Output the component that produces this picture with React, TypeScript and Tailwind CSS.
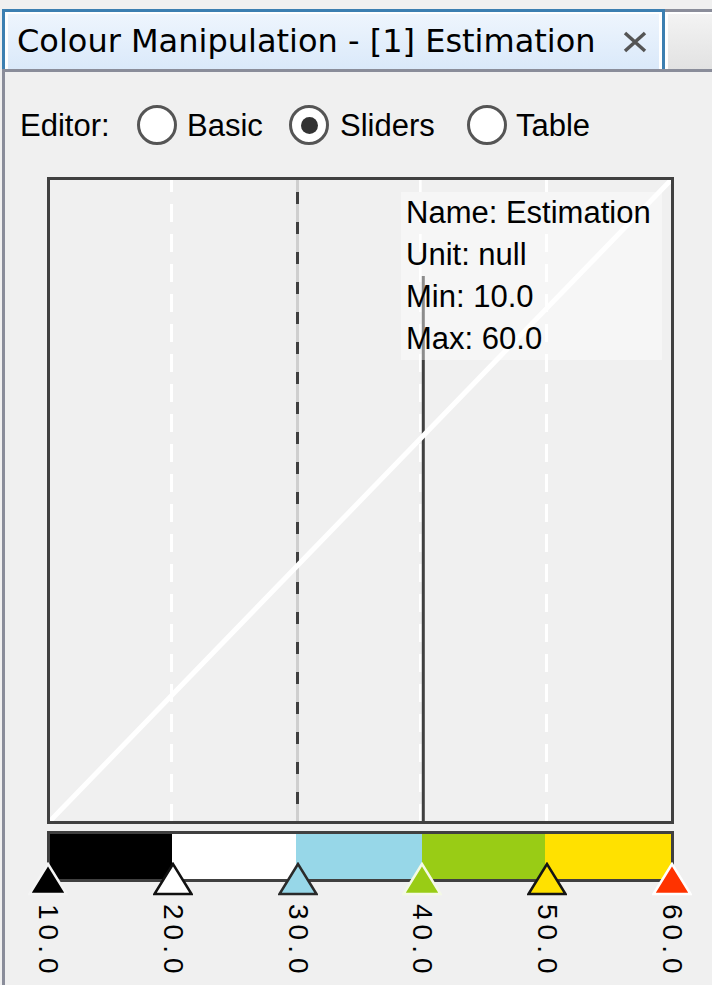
import React, { useState } from 'react';

interface Stop {
  value: number;
  fill: string;
  stroke: string;
}

const stops: Stop[] = [
  { value: 10, fill: '#000000', stroke: '#f4f4f4' },
  { value: 20, fill: '#ffffff', stroke: '#111111' },
  { value: 30, fill: '#97d7e8', stroke: '#2a2a2a' },
  { value: 40, fill: '#99cc15', stroke: '#f4f9e6' },
  { value: 50, fill: '#ffe100', stroke: '#151515' },
  { value: 60, fill: '#ff3300', stroke: '#ffffff' },
];

// colour segments of the bar, inner widths in px
const segments = [
  { color: '#000000', width: 122 },
  { color: '#ffffff', width: 124 },
  { color: '#97d7e8', width: 126 },
  { color: '#99cc15', width: 123 },
  { color: '#ffe100', width: 126 },
];

const MIN = 10;
const MAX = 60;

// x of a value, relative to the chart wrapper
const toX = (v: number) => 1 + ((v - MIN) / (MAX - MIN)) * 624;

const Radio: React.FC<{ checked?: boolean; onClick: () => void }> = ({ checked, onClick }) => (
  <button
    onClick={onClick}
    className="w-[40px] h-[40px] rounded-full border-[3px] border-[#555555] bg-white flex items-center justify-center shrink-0"
  >
    {checked && <span className="w-[17px] h-[17px] rounded-full bg-[#333333]" />}
  </button>
);

const App: React.FC = () => {
  const [editor, setEditor] = useState('Sliders');

  return (
    <div className="w-[712px] h-[985px] bg-[#f0f0f0] pt-[9px] pl-[2px] overflow-hidden text-black">
      {/* Tab strip */}
      <div className="flex h-[60px]">
        <div className="w-[663px] h-full border-[3px] border-b-0 border-[#3c7fb1]">
          <div className="h-full border-[3px] border-t-2 border-b-0 border-white bg-gradient-to-b from-[#eef5fd] to-[#dae9fa] flex items-center pl-[9px]">
            <span className="font-['DejaVu_Sans',sans-serif] text-[32px] leading-[37px] whitespace-nowrap">
              Colour Manipulation - [1] Estimation
            </span>
            <svg className="ml-auto mr-[12px]" width="24" height="22" viewBox="0 0 24 22">
              <path d="M2 2 L22 20 M22 2 L2 20" stroke="#555555" strokeWidth="3.5" />
            </svg>
          </div>
        </div>
        <div className="flex-1 border-t-[3px] border-[#8a8d9a]">
          <div className="h-full border-t-2 border-l-[3px] border-white bg-gradient-to-b from-[#f3f3f3] to-[#e2e2e2]" />
        </div>
      </div>

      {/* Panel */}
      <div className="h-[920px] border-l-[3px] border-t-[3px] border-[#8a8d9a] bg-[#f0f0f0]">
        {/* Editor row */}
        <div className="mt-[33px] h-[40px] pl-[15px] flex items-center font-['Liberation_Sans',sans-serif] text-[31px] leading-none">
          <span className="w-[117px]">Editor:</span>
          <Radio checked={editor === 'Basic'} onClick={() => setEditor('Basic')} />
          <span className="ml-[10px] w-[102px]">Basic</span>
          <Radio checked={editor === 'Sliders'} onClick={() => setEditor('Sliders')} />
          <span className="ml-[11px] w-[127px]">Sliders</span>
          <Radio checked={editor === 'Table'} onClick={() => setEditor('Table')} />
          <span className="ml-[9px]">Table</span>
        </div>

        {/* Chart + colour bar */}
        <div className="relative ml-[42px] mt-[32px] w-[627px] h-[810px]">
          <div className="relative w-[627px] h-[647px] border-[3px] border-[#404040]">
            <svg width="621" height="641" viewBox="0 0 621 641" className="block">
              <line x1="121.5" y1="0" x2="121.5" y2="641" stroke="#ffffff" strokeWidth="3" strokeDasharray="18 12" strokeDashoffset="6" />
              <line x1="247.5" y1="0" x2="247.5" y2="641" stroke="#cfcfcf" strokeWidth="3" />
              <line x1="247.5" y1="0" x2="247.5" y2="641" stroke="#404040" strokeWidth="3" strokeDasharray="12 18" strokeDashoffset="18" />
              <line x1="370.3" y1="0" x2="370.3" y2="641" stroke="#ffffff" strokeWidth="2.7" strokeDasharray="18 12" strokeDashoffset="6" />
              <line x1="373.3" y1="96" x2="373.3" y2="641" stroke="#404040" strokeWidth="3" />
              <line x1="496.5" y1="0" x2="496.5" y2="641" stroke="#ffffff" strokeWidth="3" strokeDasharray="18 12" strokeDashoffset="6" />
              <line x1="0" y1="641" x2="621" y2="0" stroke="#ffffff" strokeWidth="5" />
            </svg>
            {/* info overlay */}
            <div className="absolute left-[351px] top-[12px] w-[261px] h-[168px] bg-white/40 pl-[5px] font-['Liberation_Sans',sans-serif] text-[31px] leading-[42px] whitespace-nowrap">
              <div>Name: Estimation</div>
              <div>Unit: null</div>
              <div>Min: 10.0</div>
              <div>Max: 60.0</div>
            </div>
          </div>

          <div className="mt-[7px] w-[627px] h-[51px] border-[3px] border-[#404040] flex">
            {segments.map((s, i) => (
              <div key={i} className="h-full" style={{ width: s.width, backgroundColor: s.color }} />
            ))}
          </div>

          {/* slider handles */}
          {stops.map((s) => (
            <svg
              key={s.value}
              width="40"
              height="34"
              viewBox="0 0 40 34"
              className="absolute top-[685px]"
              style={{ left: toX(s.value) - 20 }}
            >
              <polygon points="20,2 1.5,32 38.5,32" fill={s.fill} stroke={s.stroke} strokeWidth="2.5" />
            </svg>
          ))}

          {/* value labels */}
          {stops.map((s) => (
            <span
              key={`l${s.value}`}
              className="absolute top-[727px] w-[28px] [writing-mode:vertical-rl] font-['Liberation_Sans',sans-serif] text-[28px] leading-[28px] tracking-[5px]"
              style={{ left: toX(s.value) - 14 }}
            >
              {s.value.toFixed(1)}
            </span>
          ))}
        </div>
      </div>
    </div>
  );
};

export default App;
